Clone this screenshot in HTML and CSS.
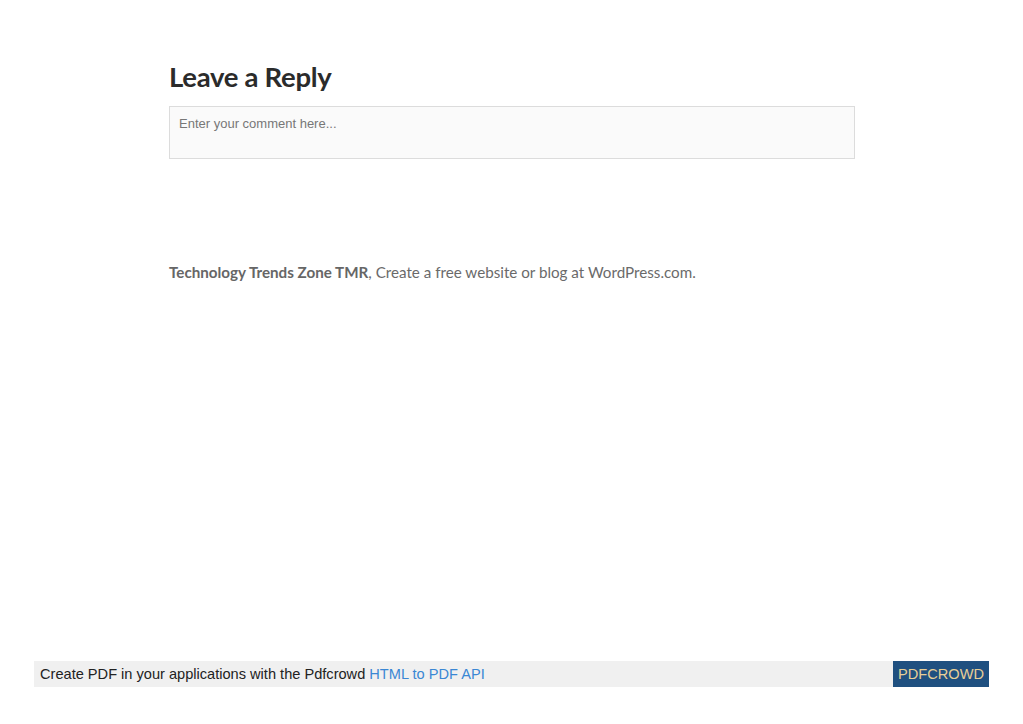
FILE: index.html
```html
<!DOCTYPE html>
<html lang="en">
<head>
    <meta charset="UTF-8">
    <meta name="viewport" content="width=device-width, initial-scale=1.0">
    <title>Leave a Reply</title>
    <link rel="stylesheet" href="styles.css">
</head>
<body>

<div class="page">
    <div class="comments">
        <h3 class="reply-title">Leave a Reply</h3>
        <div class="comment-box">Enter your comment here...</div>
    </div>

    <footer class="site-footer">
        <strong>Technology Trends Zone TMR</strong>, Create a free website or blog at WordPress.com.
    </footer>
</div>

<div class="pdf-bar">
    <div class="pdf-text">Create PDF in your applications with the Pdfcrowd <a href="#">HTML to PDF API</a></div>
    <div class="pdf-brand">PDFCROWD</div>
</div>

</body>
</html>
```

FILE: styles.css
```css
body {
    margin: 0;
    background-color: #fff;
    font-family: Lato, "Open Sans", sans-serif;
    height: 724px;
    position: relative;
}

.page {
    width: 686px;
    margin-left: 169px;
    padding-top: 60px;
}

.reply-title {
    margin: 0 0 12px;
    font-size: 27.5px;
    line-height: 34px;
    font-weight: 700;
    color: #2b2b2b;
    letter-spacing: -0.3px;
}

.comment-box {
    height: 53px;
    border: 1px solid #dcdcdc;
    background-color: #fafafa;
    padding: 9px 9px 0;
    box-sizing: border-box;
    font-family: "Liberation Sans", Arial, sans-serif;
    font-size: 13px;
    color: #777;
}

.site-footer {
    margin-top: 104px;
    font-size: 15.2px;
    color: #6a6a6a;
}

.site-footer strong {
    color: #666;
}

.pdf-bar {
    position: absolute;
    left: 34px;
    top: 661px;
    width: 955px;
    height: 26px;
    display: flex;
    background-color: #f0f0f0;
    font-family: "Liberation Sans", Arial, sans-serif;
    font-size: 14.6px;
}

.pdf-text {
    flex: 1;
    padding-left: 6px;
    line-height: 26px;
    color: #222;
}

.pdf-text a {
    color: #3a87d4;
    text-decoration: none;
}

.pdf-brand {
    width: 96px;
    line-height: 26px;
    text-align: center;
    background-color: #1f5080;
    color: #e8cf96;
}
```
